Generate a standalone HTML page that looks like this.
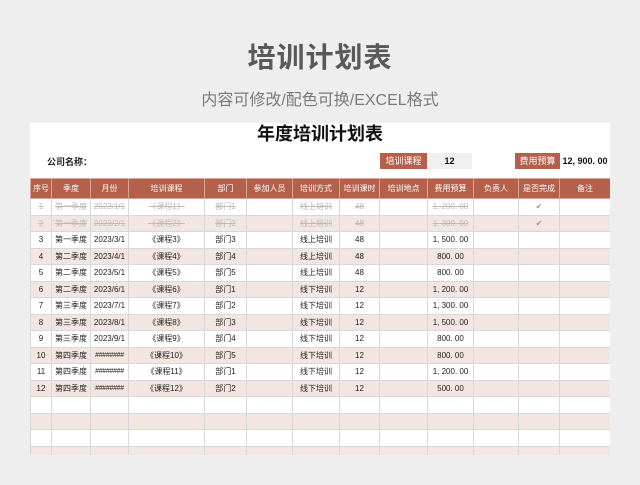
<!DOCTYPE html>
<html><head><meta charset="utf-8"><style>
body{margin:0;width:640px;height:485px;background:#eeeeee;font-family:"Liberation Sans","Noto Sans CJK SC",sans-serif;position:relative;overflow:hidden}
.t1{position:absolute;top:36px;left:0;width:640px;text-align:center;font-size:28px;font-weight:bold;color:#595959;letter-spacing:1px}
.t2{position:absolute;top:86px;left:0;width:640px;text-align:center;font-size:16px;color:#7a7a7a}
.sheet{position:absolute;left:30px;top:123px;width:580px;height:332px;background:#fff;overflow:hidden}
.st{position:absolute;top:0;left:0;width:580px;text-align:center;font-size:18px;font-weight:bold;color:#111;line-height:22px}
.co{position:absolute;left:17px;top:32px;font-size:9px;font-weight:bold;color:#222}
.box{position:absolute;top:30px;height:16px;line-height:16px;font-size:9px;text-align:center}
.lab{background:#b4604a;color:#fff}
.val{background:#f0f0f0;color:#111;font-weight:bold}
table{position:absolute;left:0;top:55px;border-collapse:collapse;table-layout:fixed;width:580px}
td{height:15.5px;padding:0;border:1px solid #d8d8d8;font-size:8px;text-align:center;color:#222;white-space:nowrap;overflow:hidden}
tr.h td{background:#b4604a;color:#fff;height:19px;border-color:#d9a597}
tr.a td{background:#f3e6e0}
tr.d td{color:#bbb;text-decoration:line-through}
tr.d td.nt{text-decoration:none;color:#999}
td.s{font-size:7px;letter-spacing:-0.3px}
</style></head><body>
<div class="t1">培训计划表</div>
<div class="t2">内容可修改/配色可换/EXCEL格式</div>
<div class="sheet">
<div class="st">年度培训计划表</div>
<div class="co">公司名称：</div>
<div class="box lab" style="left:350px;width:47px">培训课程</div>
<div class="box val" style="left:397px;width:45px">12</div>
<div class="box lab" style="left:485px;width:45px">费用预算</div>
<div class="box val" style="left:530px;width:50px;background:#fff">12, 900. 00</div>
<table>
<colgroup><col style="width:21px"><col style="width:39px"><col style="width:38px"><col style="width:76px"><col style="width:42px"><col style="width:46px"><col style="width:47px"><col style="width:40px"><col style="width:48px"><col style="width:46px"><col style="width:45px"><col style="width:41px"><col style="width:51px"></colgroup>
<tr class="h"><td>序号</td><td>季度</td><td>月份</td><td>培训课程</td><td>部门</td><td>参加人员</td><td>培训方式</td><td>培训课时</td><td>培训地点</td><td>费用预算</td><td>负责人</td><td>是否完成</td><td>备注</td></tr>
<tr class="d"><td>1</td><td>第一季度</td><td>2023/1/1</td><td>《课程1》</td><td>部门1</td><td></td><td>线上培训</td><td>48</td><td></td><td>1, 200. 00</td><td></td><td class="nt">✔</td><td></td></tr>
<tr class="d a"><td>2</td><td>第一季度</td><td>2023/2/1</td><td>《课程2》</td><td>部门2</td><td></td><td>线上培训</td><td>48</td><td></td><td>1, 300. 00</td><td></td><td class="nt">✔</td><td></td></tr>
<tr><td>3</td><td>第一季度</td><td>2023/3/1</td><td>《课程3》</td><td>部门3</td><td></td><td>线上培训</td><td>48</td><td></td><td>1, 500. 00</td><td></td><td></td><td></td></tr>
<tr class="a"><td>4</td><td>第二季度</td><td>2023/4/1</td><td>《课程4》</td><td>部门4</td><td></td><td>线上培训</td><td>48</td><td></td><td>800. 00</td><td></td><td></td><td></td></tr>
<tr><td>5</td><td>第二季度</td><td>2023/5/1</td><td>《课程5》</td><td>部门5</td><td></td><td>线上培训</td><td>48</td><td></td><td>800. 00</td><td></td><td></td><td></td></tr>
<tr class="a"><td>6</td><td>第二季度</td><td>2023/6/1</td><td>《课程6》</td><td>部门1</td><td></td><td>线下培训</td><td>12</td><td></td><td>1, 200. 00</td><td></td><td></td><td></td></tr>
<tr><td>7</td><td>第三季度</td><td>2023/7/1</td><td>《课程7》</td><td>部门2</td><td></td><td>线下培训</td><td>12</td><td></td><td>1, 300. 00</td><td></td><td></td><td></td></tr>
<tr class="a"><td>8</td><td>第三季度</td><td>2023/8/1</td><td>《课程8》</td><td>部门3</td><td></td><td>线下培训</td><td>12</td><td></td><td>1, 500. 00</td><td></td><td></td><td></td></tr>
<tr><td>9</td><td>第三季度</td><td>2023/9/1</td><td>《课程9》</td><td>部门4</td><td></td><td>线下培训</td><td>12</td><td></td><td>800. 00</td><td></td><td></td><td></td></tr>
<tr class="a"><td>10</td><td>第四季度</td><td class="s">########</td><td>《课程10》</td><td>部门5</td><td></td><td>线下培训</td><td>12</td><td></td><td>800. 00</td><td></td><td></td><td></td></tr>
<tr><td>11</td><td>第四季度</td><td class="s">########</td><td>《课程11》</td><td>部门1</td><td></td><td>线下培训</td><td>12</td><td></td><td>1, 200. 00</td><td></td><td></td><td></td></tr>
<tr class="a"><td>12</td><td>第四季度</td><td class="s">########</td><td>《课程12》</td><td>部门2</td><td></td><td>线下培训</td><td>12</td><td></td><td>500. 00</td><td></td><td></td><td></td></tr>
<tr><td></td><td></td><td></td><td></td><td></td><td></td><td></td><td></td><td></td><td></td><td></td><td></td><td></td></tr>
<tr class="a"><td></td><td></td><td></td><td></td><td></td><td></td><td></td><td></td><td></td><td></td><td></td><td></td><td></td></tr>
<tr><td></td><td></td><td></td><td></td><td></td><td></td><td></td><td></td><td></td><td></td><td></td><td></td><td></td></tr>
<tr class="a"><td></td><td></td><td></td><td></td><td></td><td></td><td></td><td></td><td></td><td></td><td></td><td></td><td></td></tr>
</table>
</div>
</body></html>
